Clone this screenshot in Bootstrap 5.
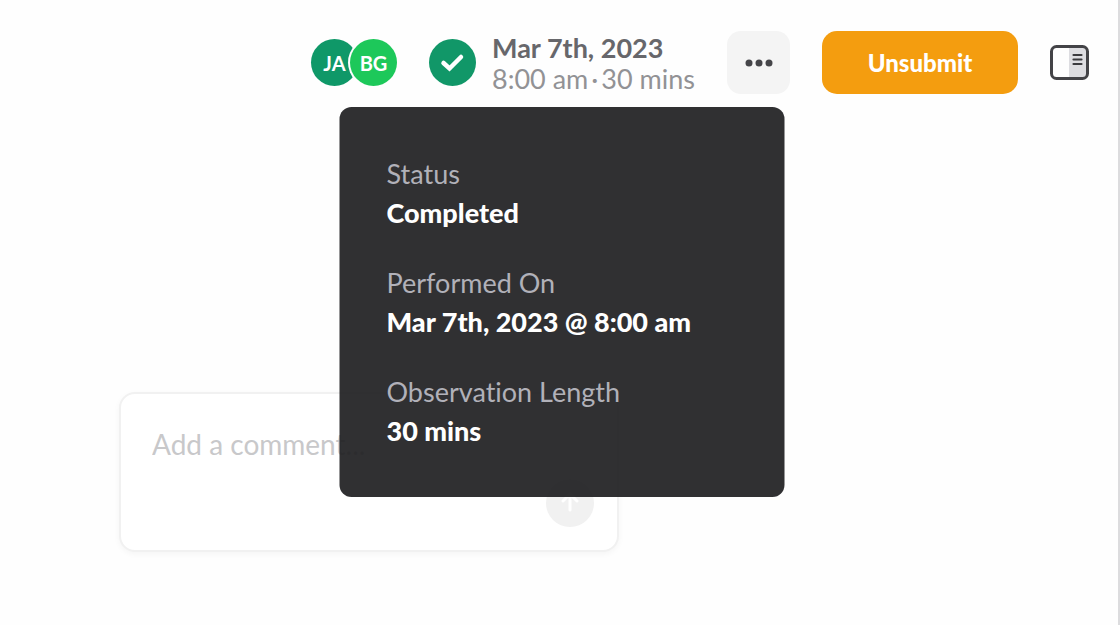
<!DOCTYPE html>
<html lang="en">
<head>
<meta charset="utf-8">
<meta name="viewport" content="width=device-width, initial-scale=1">
<title>Observation</title>
<link rel="stylesheet" href="https://cdn.jsdelivr.net/npm/bootstrap@5.3.0/dist/css/bootstrap.min.css">
<style>
body { font-family: Lato, "Liberation Sans", sans-serif; font-size: 27px; font-variant-ligatures: none; background: #fefefe; }
.page { border-right: 2px solid #dcdcde; }
.topbar { padding: 31px 29px 0 32px; gap: 32px; }
.avatar { width: 47px; height: 47px; font-size: 20px; font-weight: 700; color: #fff; }
.avatar-ja { background: #0f9868; }
.avatar-bg { background: #1dc85a; margin-left: -8px; box-shadow: 0 0 0 2px #fefefe; }
.status-group { gap: 16px; }
.when { line-height: 31px; }
.when-date { color: #67676b; font-weight: 700; }
.when-time { color: #929295; gap: 3px; }
.btn-more { width: 63px; height: 63px; border-radius: 14px; background: #f4f4f4; }
.btn-more:hover { background: #ebebeb; }
.btn-unsubmit { width: 196px; height: 63px; border-radius: 15px; background: #f49d0f; color: #fff; font-size: 24px; font-weight: 900; }
.btn-unsubmit:hover { background: #e08e08; color: #fff; }
.details { top: 100%; width: 445px; padding: 47px; margin-top: 13px; border-radius: 12px; background: rgba(32, 32, 34, .93); line-height: 39px; z-index: 10; }
.details dl { gap: 31px; }
.details dt { color: #b1b1b9; font-weight: 400; }
.details dd { color: #fff; font-weight: 900; }
.workspace { padding: 298px 32px 72px 119px; }
.comment-box { max-width: 500px; height: 160px; padding: 30px 23px 23px 31px; border: 2px solid #f1f1f1; border-radius: 16px; background: #fff; box-shadow: 0 2px 6px rgba(0, 0, 0, .04); }
.comment-box textarea { resize: none; font-size: 28px; line-height: 40px; color: #48484b; }
.comment-box textarea::placeholder { color: #c8c8ca; opacity: 1; }
.btn-send { width: 48px; height: 48px; background: #f1f1f1; }
</style>
</head>
<body>
<div class="page min-vh-100">
  <header class="topbar d-flex align-items-center justify-content-end">
    <div class="d-flex">
      <span class="avatar avatar-ja rounded-circle d-flex align-items-center justify-content-center">JA</span>
      <span class="avatar avatar-bg rounded-circle d-flex align-items-center justify-content-center">BG</span>
    </div>
    <div class="status-group d-flex align-items-center align-self-stretch position-relative">
      <svg width="47" height="47" viewBox="0 0 47 47" role="img" aria-label="Completed"><circle cx="23.500" cy="23.500" r="23.500" fill="#119768"/><path d="M14.500 24l6 5.500L32 18" fill="none" stroke="#fff" stroke-width="4.500" stroke-linecap="round" stroke-linejoin="miter"/></svg>
      <div class="when text-nowrap">
        <div class="when-date">Mar 7th, 2023</div>
        <div class="when-time d-flex"><span>8:00 am</span><span>·</span><span>30 mins</span></div>
      </div>
      <div class="details position-absolute start-50 translate-middle-x">
        <dl class="d-flex flex-column m-0">
          <div><dt>Status</dt><dd class="m-0">Completed</dd></div>
          <div><dt>Performed On</dt><dd class="m-0 text-nowrap">Mar 7th, 2023 @ 8:00 am</dd></div>
          <div><dt>Observation Length</dt><dd class="m-0">30 mins</dd></div>
        </dl>
      </div>
    </div>
    <button type="button" class="btn btn-more border-0 p-0 d-flex align-items-center justify-content-center" aria-label="More options">
      <svg width="28" height="8" viewBox="0 0 28 8" fill="#454549"><circle cx="4" cy="4" r="3.500"/><circle cx="14" cy="4" r="3.500"/><circle cx="24" cy="4" r="3.500"/></svg>
    </button>
    <button type="button" class="btn btn-unsubmit border-0 p-0">Unsubmit</button>
    <button type="button" class="btn border-0 p-0 d-flex" aria-label="Toggle side panel">
      <svg width="39" height="35" viewBox="0 0 39 35"><path d="M19 2h13a5 5 0 0 1 5 5v21a5 5 0 0 1-5 5H19z" fill="#dddde1"/><rect x="1.500" y="1.500" width="36" height="32" rx="5" fill="none" stroke="#434347" stroke-width="3"/><path d="M23.500 10h8M23.500 14.500h8M23.500 19h8" stroke="#3a3a3e" stroke-width="2.200" stroke-linecap="round"/></svg>
    </button>
  </header>
  <main class="workspace">
    <form class="comment-box d-flex">
      <textarea class="form-control border-0 shadow-none bg-transparent p-0 h-100" placeholder="Add a comment..." aria-label="Add a comment"></textarea>
      <button type="button" class="btn btn-send rounded-circle border-0 p-0 flex-shrink-0 align-self-end d-flex align-items-center justify-content-center" aria-label="Send comment">
        <svg width="24" height="24" viewBox="0 0 24 24" fill="none" stroke="#fff" stroke-width="3" stroke-linecap="round" stroke-linejoin="round"><path d="M12 19V3M5 10l7-7 7 7"/></svg>
      </button>
    </form>
  </main>
</div>
<script src="https://cdn.jsdelivr.net/npm/bootstrap@5.3.0/dist/js/bootstrap.bundle.min.js"></script>
</body>
</html>
